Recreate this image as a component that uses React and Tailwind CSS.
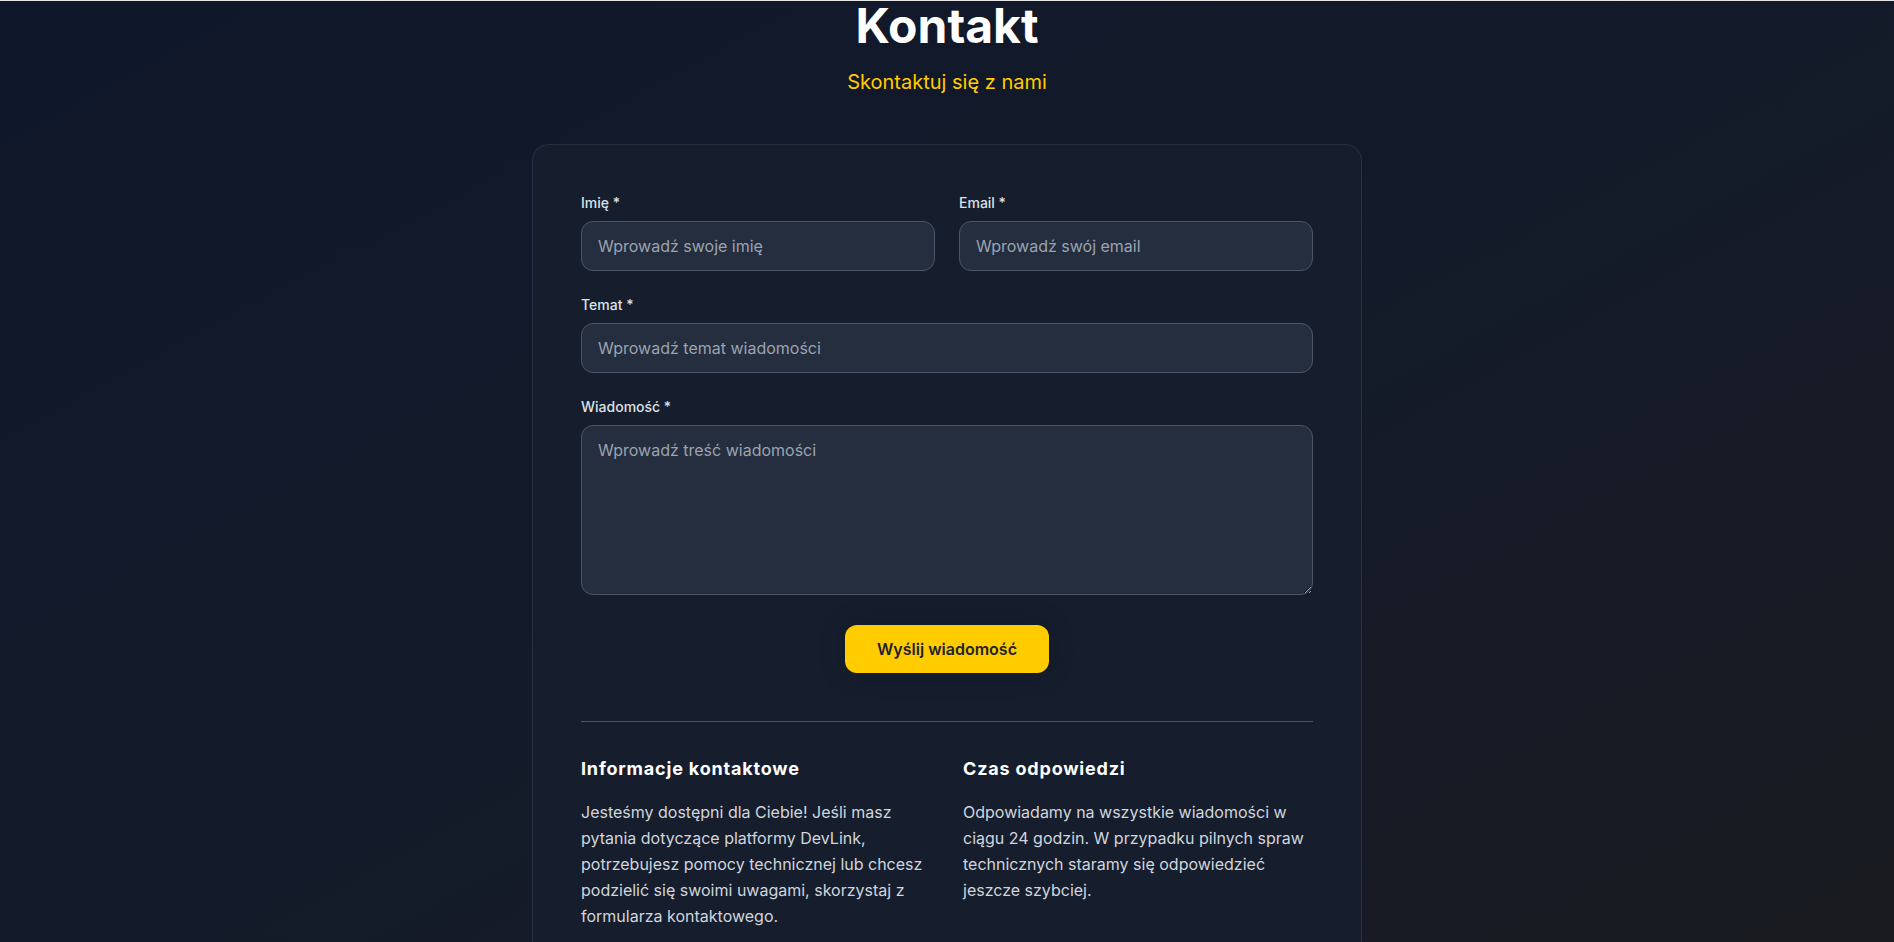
import { useState } from 'react'

const inputCls =
  'w-full px-4 py-3 text-base text-white bg-[#252e3e] border border-[#4a5567] rounded-xl placeholder:text-[#9aa3b1] focus:outline-none focus:ring-2 focus:ring-[#ffcc00]'

function Field({ label, children }) {
  return (
    <div>
      <label className="block text-sm font-medium text-[#dde1e7] mb-2">{label}</label>
      {children}
    </div>
  )
}

export default function App() {
  const [form, setForm] = useState({ imie: '', email: '', temat: '', wiadomosc: '' })

  const set = (key) => (e) => setForm({ ...form, [key]: e.target.value })

  return (
    <div className="min-h-screen border-t border-[#e5e5e5] bg-gradient-to-br from-[#0f172a] via-[#131a29] to-[#1a1b1f] font-['Inter',sans-serif]">
      <div className="flex flex-col items-center pt-[1px] pb-16">
        {/* Header */}
        <h1 className="text-5xl leading-none font-bold text-white">Kontakt</h1>
        <p className="mt-[18px] text-xl text-[#ffcc00]">Skontaktuj się z nami</p>

        {/* Card */}
        <div className="mt-12 w-[830px] bg-[#161e2e] border border-[#263042] rounded-2xl p-12">
          <form className="space-y-6" onSubmit={(e) => e.preventDefault()}>
            <div className="grid grid-cols-2 gap-6">
              <Field label="Imię *">
                <input className={inputCls} placeholder="Wprowadź swoje imię" value={form.imie} onChange={set('imie')} />
              </Field>
              <Field label="Email *">
                <input type="email" className={inputCls} placeholder="Wprowadź swój email" value={form.email} onChange={set('email')} />
              </Field>
            </div>
            <Field label="Temat *">
              <input className={inputCls} placeholder="Wprowadź temat wiadomości" value={form.temat} onChange={set('temat')} />
            </Field>
            <Field label="Wiadomość *">
              <textarea
                rows={6}
                className={inputCls + ' block leading-6'}
                placeholder="Wprowadź treść wiadomości"
                value={form.wiadomosc}
                onChange={set('wiadomosc')}
              />
            </Field>
            <div className="flex justify-center pt-1.5">
              <button
                type="submit"
                className="px-8 py-3 rounded-xl bg-[#ffcc00] text-[#1f2230] font-semibold text-base leading-6 shadow-[0_0_24px_rgba(0,0,0,0.25)] hover:bg-[#ffd633] transition-all"
              >
                Wyślij wiadomość
              </button>
            </div>
          </form>

          {/* Info */}
          <div className="mt-12 pt-[33px] border-t border-[#4b5563] grid grid-cols-2 gap-8">
            <div>
              <h3 className="text-lg font-bold tracking-[0.045em] text-white mb-4">Informacje kontaktowe</h3>
              <p className="text-base leading-[26px] text-[#d1d5db]">
                Jesteśmy dostępni dla Ciebie! Jeśli masz pytania dotyczące platformy DevLink, potrzebujesz pomocy
                technicznej lub chcesz podzielić się swoimi uwagami, skorzystaj z formularza kontaktowego.
              </p>
            </div>
            <div>
              <h3 className="text-lg font-bold tracking-[0.045em] text-white mb-4">Czas odpowiedzi</h3>
              <p className="text-base leading-[26px] text-[#d1d5db]">
                Odpowiadamy na wszystkie wiadomości w ciągu 24 godzin. W przypadku pilnych spraw technicznych staramy
                się odpowiedzieć jeszcze szybciej.
              </p>
            </div>
          </div>
        </div>
      </div>
    </div>
  )
}
